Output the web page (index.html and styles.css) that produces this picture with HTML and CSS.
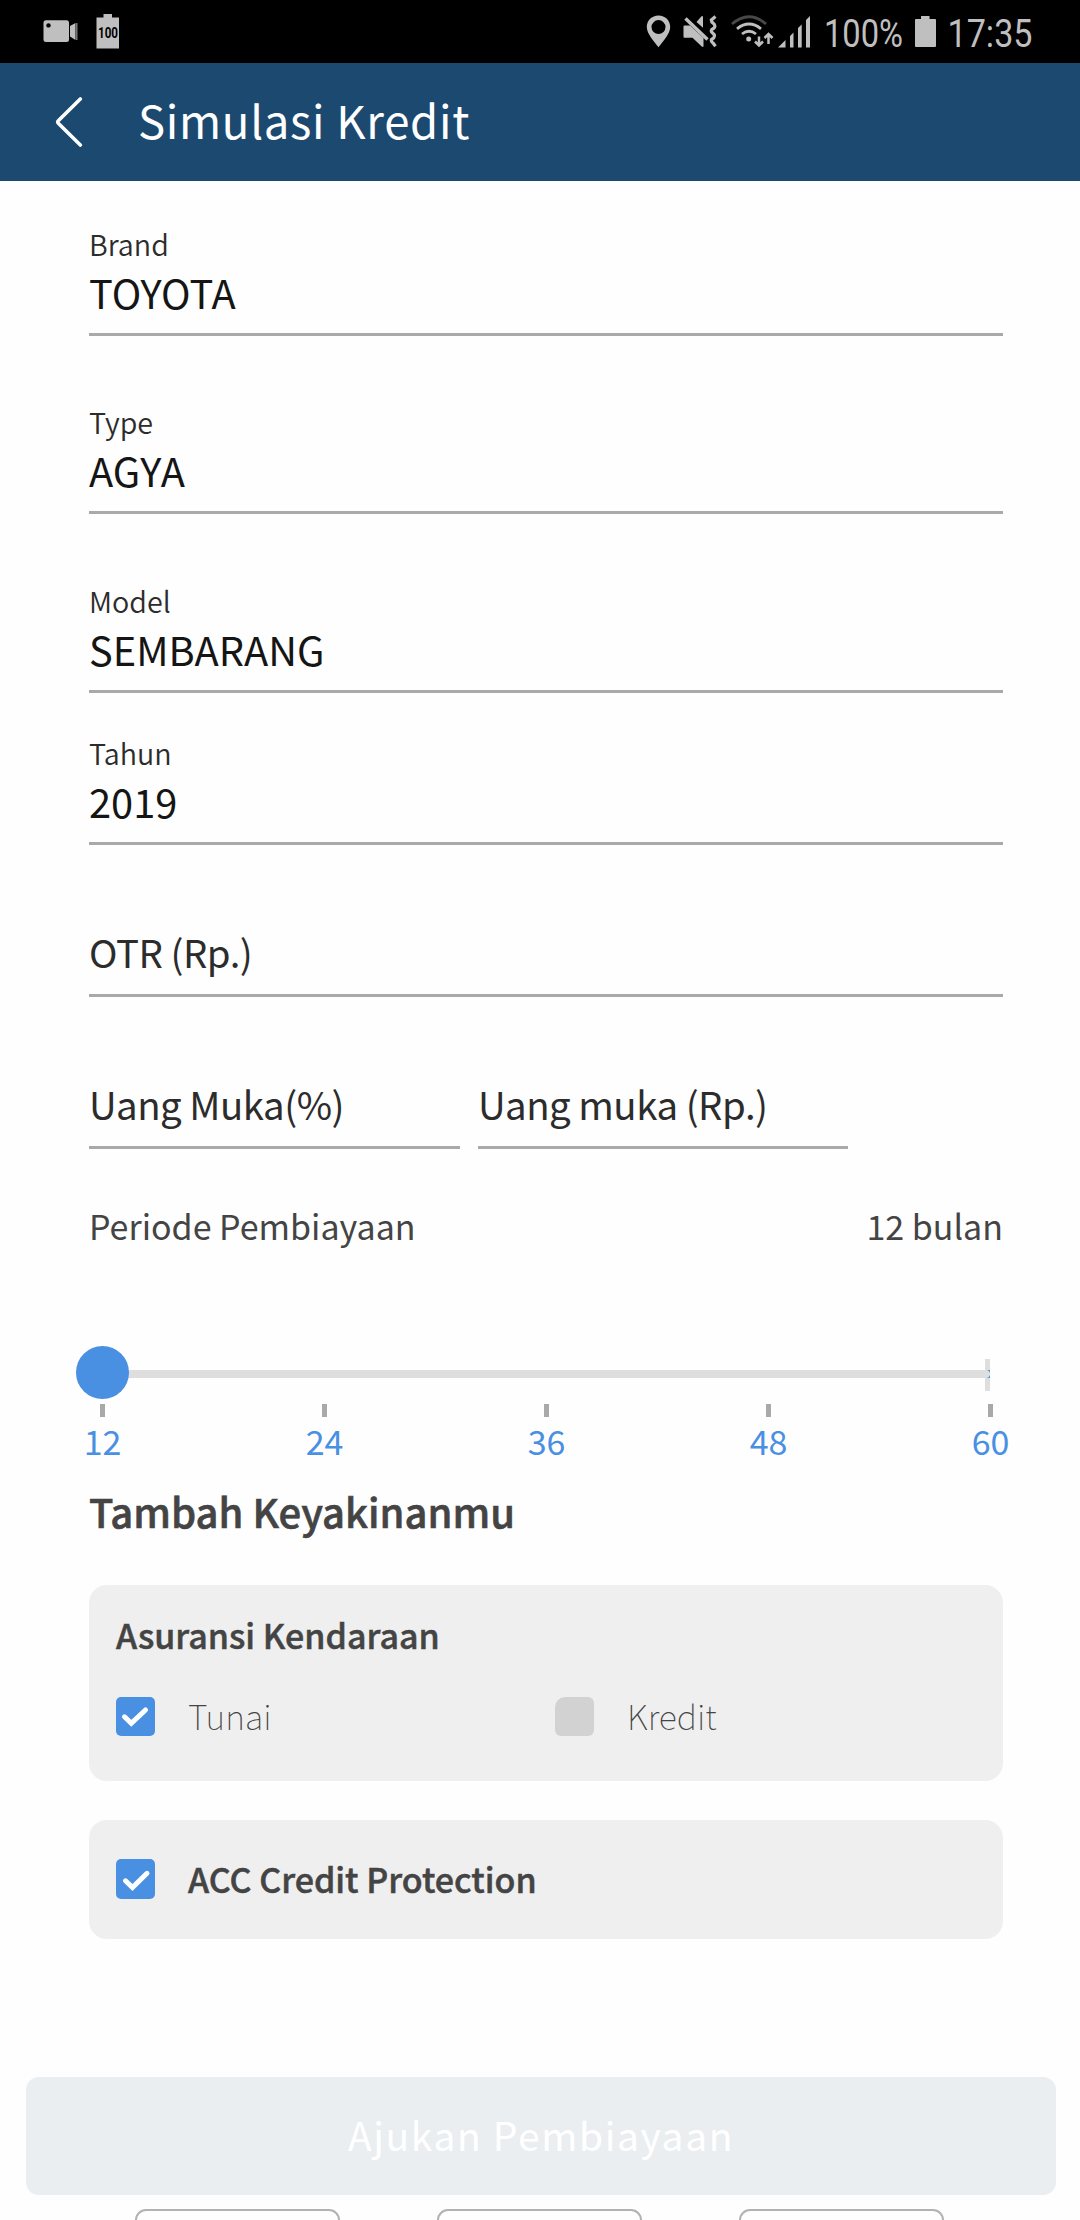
FILE: index.html
```html
<!DOCTYPE html>
<html lang="id">
<head>
<meta charset="utf-8">
<title>Simulasi Kredit</title>
<link rel="stylesheet" href="styles.css">
</head>
<body>
<div class="screen">
  <div class="status-bar">
    <svg class="status-left" width="90" height="63" viewBox="40 0 90 63">
      <rect x="43.500" y="20.300" width="25.500" height="21.700" rx="2.500"/>
      <circle class="hole" cx="48.500" cy="25.400" r="2.200"/>
      <path d="M70 26l5.500-3v17L70 36.500z"/>
      <rect class="dim" x="76" y="23" width="1.500" height="17"/>
      <path d="M103.500 14h8.500v3.500h7v31H96.500v-31h7z"/>
      <text class="badge-text" x="98" y="38" textLength="20" lengthAdjust="spacingAndGlyphs">100</text>
    </svg>
    <svg class="status-right" width="440" height="63" viewBox="640 0 440 63">
      <path fill-rule="evenodd" d="M658.500 15.500c-6.800 0-11.700 5-11.700 11.500 0 7 7.200 14 11.700 20.300 4.500-6.300 11.700-13.300 11.700-20.300 0-6.500-4.900-11.500-11.700-11.500zm0 4.600a7 7 0 1 1 0 14 7 7 0 0 1 0-14z"/>
      <path d="M684.500 25.500h5.500l13.500 12.500v8.700h-1.500l-9.500-9h-8a1 1 0 0 1-1-1v-10.200a1 1 0 0 1 1-1zM696.500 22l5-5.800h1.500v11.500z"/>
      <path class="line mute" d="M685.500 18.500l22 21"/>
      <path class="line wave" d="M715.500 16.500l-4.200 3.500q0 2 1.800 3.200t1.800 3-3 3.200q-1.500 2 .6 3.500t2 3.200-3 3.400q-.8 1.800 1.500 3.500l2.500 3.300"/>
      <path class="line arc faint" d="M732 24q17-14.500 34 0"/>
      <path class="line arc" d="M737 28.800q12-9.500 24 0M742 34q7-5.500 14 0"/>
      <circle cx="748.700" cy="39" r="2.500"/>
      <path class="line arrows" d="M759 36.500v9M755 41.500l4 4 4-4M768.500 44v-10M764.500 38l4-4 4 4"/>
      <path d="M778 47.500l7.500-7.500v7.500zM790 36l3.500-3.500v15H790zM798 28l3.700-3.500v23H798zM806 20l4-4v31.500h-4z"/>
      <text class="clock-text" x="824" y="47" textLength="79" lengthAdjust="spacingAndGlyphs">100%</text>
      <path d="M921 16h8.500v3H935a1 1 0 0 1 1 1v26a1 1 0 0 1-1 1h-19a1 1 0 0 1-1-1V20a1 1 0 0 1 1-1h5z"/>
      <text class="clock-text" x="947.500" y="47" textLength="85" lengthAdjust="spacingAndGlyphs">17:35</text>
    </svg>
  </div>

  <header class="app-bar">
    <svg class="back" width="30" height="50" viewBox="0 0 30 50"><path d="M26.300 2L4.300 23.800q-1.300 1.200 0 2.400L26.300 48"/></svg>
    <h1 class="title">Simulasi Kredit</h1>
  </header>

  <main class="form">
    <div class="field">
      <div class="label">Brand</div>
      <div class="value">TOYOTA</div>
    </div>
    <div class="field field-type">
      <div class="label">Type</div>
      <div class="value">AGYA</div>
    </div>
    <div class="field field-model">
      <div class="label">Model</div>
      <div class="value">SEMBARANG</div>
    </div>
    <div class="field field-year">
      <div class="label">Tahun</div>
      <div class="value">2019</div>
    </div>
    <div class="field field-empty">
      <div class="placeholder">OTR (Rp.)</div>
    </div>
    <div class="down-payment">
      <div class="field"><div class="placeholder">Uang Muka(%)</div></div>
      <div class="field"><div class="placeholder">Uang muka (Rp.)</div></div>
    </div>

    <div class="period">
      <span>Periode Pembiayaan</span>
      <span>12 bulan</span>
    </div>
    <div class="slider">
      <div class="track"></div>
      <div class="end-mark"><i class="end-cap"></i></div>
      <div class="thumb"></div>
    </div>
    <div class="scale">
      <div class="step"><i class="tick"></i>12</div>
      <div class="step"><i class="tick"></i>24</div>
      <div class="step"><i class="tick"></i>36</div>
      <div class="step"><i class="tick"></i>48</div>
      <div class="step"><i class="tick"></i>60</div>
    </div>

    <h2 class="section-title">Tambah Keyakinanmu</h2>
    <section class="card card-insurance">
      <h3 class="card-title">Asuransi Kendaraan</h3>
      <div class="options">
        <div class="option">
          <svg class="check" width="39" height="39" viewBox="0 0 39 39"><path d="M8.500 19.800l6.800 6.600L29.500 13"/></svg>
          <span>Tunai</span>
        </div>
        <div class="option">
          <div class="check off"></div>
          <span>Kredit</span>
        </div>
      </div>
    </section>
    <section class="card card-protection">
      <svg class="check" width="39" height="40" viewBox="0 0 39 40"><path d="M9.500 21.800l7 6.800L31 14.300"/></svg>
      <h3 class="card-title">ACC Credit Protection</h3>
    </section>
  </main>

  <div class="submit">Ajukan Pembiayaan</div>
  <div class="peek">
    <div class="peek-box"></div>
    <div class="peek-box"></div>
    <div class="peek-box"></div>
  </div>
</div>
</body>
</html>
```
FILE: styles.css
```css
* { box-sizing: border-box; }
body {
  margin: 0;
  background: #fefefe;
  font-family: "Noto Sans CJK SC", "Noto Sans", sans-serif;
  color: #444;
}
h1, h2, h3 { margin: 0; }
.screen { width: 1080px; height: 2220px; overflow: hidden; }

.status-bar {
  height: 63px;
  padding-left: 40px;
  display: flex;
  justify-content: space-between;
  background: #000;
  fill: #bfbfbf;
}
.status-bar .hole { fill: #000; }
.status-bar .dim { fill: #777; }
.badge-text { font: 700 14px Roboto, sans-serif; fill: #000; }
.clock-text { font: 400 39px Roboto, sans-serif; }
.line { fill: none; stroke: #bfbfbf; }
.mute { stroke-width: 3.4; }
.wave { stroke-width: 3.2; }
.arc { stroke-width: 2.8; }
.status-bar .faint { stroke: #484848; }
.arrows { stroke-width: 2.5; }

.app-bar {
  height: 118px;
  padding-left: 54px;
  display: flex;
  background: #1c4970;
}
.back {
  margin-top: 34px;
  fill: none;
  stroke: #fff;
  stroke-width: 3.6;
  stroke-linecap: round;
}
.title {
  margin: 24px 0 0 54px;
  font-size: 45.500px;
  line-height: 64px;
  font-weight: 400;
  letter-spacing: 0.700px;
  color: #fff;
}

.form { width: 914px; margin: 43px 0 0 89px; }
.field { border-bottom: 3px solid #a9a9a9; padding-bottom: 15px; }
.label { font-size: 28.700px; line-height: 40px; color: #2c2c2c; font-weight: 350; }
.value { margin-top: 2px; font-size: 39.800px; line-height: 52px; color: #151515; }
.placeholder {
  font-size: 38.400px;
  line-height: 52px;
  letter-spacing: -0.500px;
  color: #2c2c2c;
  white-space: nowrap;
}
.field-type { margin-top: 66px; }
.field-model { margin-top: 67px; }
.field-year { margin-top: 40px; }
.field-empty { margin-top: 80px; padding-bottom: 17px; }
.down-payment {
  margin-top: 80px;
  display: grid;
  grid-template-columns: 371px 370px;
  gap: 18px;
}
.down-payment .field { padding-bottom: 17px; }

.period {
  margin-top: 55px;
  display: flex;
  justify-content: space-between;
  font-size: 34px;
  line-height: 44px;
}
.slider { position: relative; height: 53px; margin-top: 98px; padding-top: 24px; }
.track { height: 8px; width: 899px; background: #dedede; }
.thumb {
  position: absolute;
  left: -13px;
  top: 0;
  width: 53px;
  height: 53px;
  border-radius: 50%;
  background: #4990e2;
}
.end-mark {
  position: absolute;
  left: 896px;
  top: 13px;
  width: 5px;
  height: 32px;
  padding-top: 11px;
  background: #dedede;
}
.end-cap {
  display: block;
  width: 5px;
  height: 8px;
  background: radial-gradient(circle at 1px 4px, #dedede 3.600px, #4990e2 4.400px);
}
.scale {
  display: flex;
  justify-content: space-between;
  width: 938px;
  margin: 5px 0 0 -11.500px;
  font-size: 34px;
  line-height: 44px;
  color: #4990e2;
}
.step { width: 50px; display: flex; flex-direction: column; align-items: center; }
.tick { width: 5px; height: 13px; margin-bottom: 2px; background: #a9a9a9; }

.section-title {
  margin-top: 21px;
  font-size: 40px;
  line-height: 54px;
  font-weight: 500;
  -webkit-text-stroke: 0.600px #444;
}
.card { background: #efefef; border-radius: 18px; padding-left: 27px; }
.card-title {
  font-size: 34px;
  line-height: 46px;
  font-weight: 500;
  -webkit-text-stroke: 0.500px #444;
}
.card-insurance { height: 196px; margin-top: 47px; padding-top: 27px; }
.options {
  display: grid;
  grid-template-columns: 439px 1fr;
  margin-top: 36px;
  font-size: 34px;
  line-height: 44px;
  font-weight: 100;
}
.option { display: flex; gap: 33px; }
.check {
  flex: none;
  margin-top: 3px;
  border-radius: 5px;
  background: #4990e2;
  fill: none;
  stroke: #fff;
  stroke-width: 5;
  stroke-linecap: round;
}
.off { width: 39px; height: 39px; border-radius: 10px 6px 6px 6px; background: #d2d2d2; }
.card-protection {
  display: flex;
  gap: 33px;
  height: 119px;
  margin-top: 39px;
  padding-top: 36px;
}

.submit {
  width: 1030px;
  height: 118px;
  margin: 138px 0 0 26px;
  padding-top: 30px;
  border-radius: 13px;
  background: #eaeef1;
  color: #fff;
  text-align: center;
  font-size: 39px;
  line-height: 54px;
  letter-spacing: 1.600px;
}
.peek {
  display: flex;
  gap: 97px;
  height: 11px;
  margin-top: 14px;
  padding-left: 135px;
  overflow: hidden;
}
.peek-box {
  flex: none;
  width: 205px;
  height: 40px;
  border: 2px solid #b2b2b2;
  border-radius: 11px;
}
```
